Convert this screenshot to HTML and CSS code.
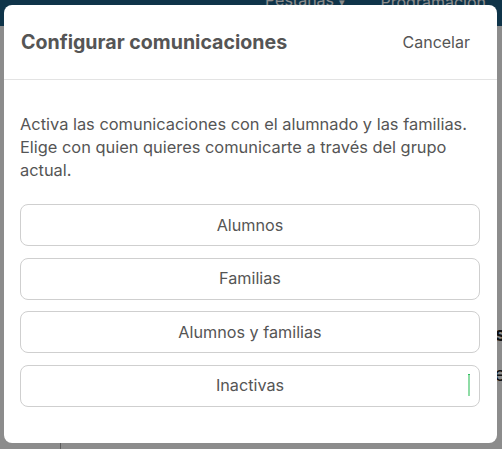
FILE: index.html
```html
<!DOCTYPE html>
<html lang="es">
<head>
    <meta charset="UTF-8">
    <title>Configurar comunicaciones</title>
    <link rel="stylesheet" href="styles.css">
</head>
<body>
    <div class="page">
        <div class="topbar">
            <a class="topLink">Pestañas <span class="caret">▾</span></a>
            <a class="topLink">Programación</a>
        </div>
        <div class="pageBody">
            <span class="ghost ghostS">s</span>
            <span class="ghost ghostE">e</span>
            <div class="sideLine"></div>
        </div>
    </div>

    <div class="overlay"></div>

    <div class="modal">
        <div class="modalHead">
            <h2>Configurar comunicaciones</h2>
            <a class="cancel">Cancelar</a>
        </div>
        <div class="modalBody">
            <p>Activa las comunicaciones con el alumnado y las familias. Elige con quien quieres comunicarte a través del grupo actual.</p>
            <div class="options">
                <button class="option">Alumnos</button>
                <button class="option">Familias</button>
                <button class="option">Alumnos y familias</button>
                <button class="option">Inactivas<span class="mark"></span></button>
            </div>
        </div>
    </div>
</body>
</html>
```

FILE: styles.css
```css
* {
    margin: 0;
    padding: 0;
    box-sizing: border-box;
}

body {
    width: 502px;
    height: 449px;
    overflow: hidden;
    font-family: Inter, "Noto Sans", sans-serif;
    background: #fff;
    position: relative;
}

.page {
    height: 100%;
}

.topbar {
    height: 26px;
    background: #1d5f86;
    display: flex;
    justify-content: flex-end;
    gap: 36px;
    padding-right: 16px;
    align-items: flex-end;
    overflow: hidden;
}
.topLink {
    color: #fff;
    font-size: 16px;
    line-height: 20px;
    margin-bottom: 14px;
}
.caret {
    font-size: 11px;
}

.pageBody {
    position: relative;
    height: 423px;
}
.ghost {
    position: absolute;
    right: -4px;
    font-size: 20px;
    color: #222;
}
.ghostS {
    top: 296px;
    font-weight: 700;
}
.ghostE {
    top: 336px;
}
.sideLine {
    position: absolute;
    left: 60px;
    top: 400px;
    bottom: 0;
    border-left: 1px solid #aaa;
}

.overlay {
    position: absolute;
    inset: 0;
    background: rgba(0, 0, 0, 0.45);
}

.modal {
    position: absolute;
    left: 4px;
    top: 5px;
    width: 493px;
    height: 438px;
    background: #fff;
    border-radius: 8px;
    color: #555;
}

.modalHead {
    height: 75px;
    display: flex;
    align-items: center;
    justify-content: space-between;
    padding: 0 27px 0 17px;
    border-bottom: 1px solid #e3e3e3;
}
.modalHead h2 {
    font-size: 19.6px;
    font-weight: 700;
    color: #555;
    margin-top: -1px;
}
.cancel {
    font-size: 16px;
    cursor: pointer;
}

.modalBody {
    padding: 33px 16px 0 16px;
}
.modalBody p {
    font-size: 16.4px;
    line-height: 23px;
}
.options {
    margin-top: 22px;
    display: flex;
    flex-direction: column;
    gap: 11.5px;
    margin-right: 1px;
}
.option {
    position: relative;
    height: 42px;
    padding-bottom: 1px;
    background: #fff;
    border: 1px solid #cfcfcf;
    border-radius: 8px;
    font-family: inherit;
    font-size: 16.2px;
    color: #555;
    cursor: pointer;
}
.mark {
    position: absolute;
    right: 9px;
    top: 8px;
    width: 2px;
    height: 22px;
    background: #8fdca6;
    border-top: 1px solid #2ebd5f;
}
```
